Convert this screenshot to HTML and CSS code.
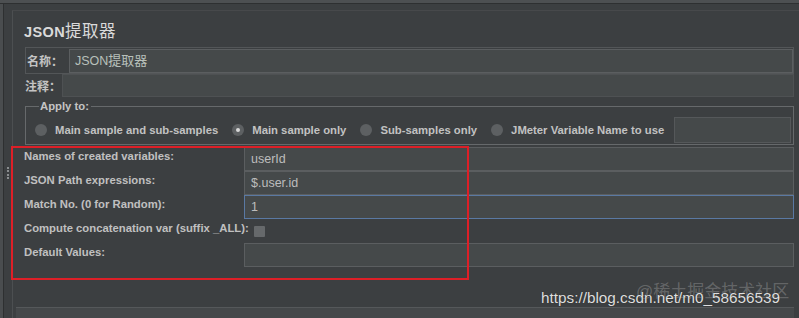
FILE: index.html
```html
<!DOCTYPE html>
<html lang="zh">

<head>
    <meta charset="UTF-8">
    <meta name="viewport" content="width=device-width, initial-scale=1.0">
    <title>JSON提取器</title>
    <link rel="stylesheet" href="styles.css">
</head>

<body>
    <div class="app">
        <div class="top-strip"></div>
        <div class="frame">
            <div class="frame-edge"></div>
            <div class="gutter"><span class="grip"></span></div>

            <div class="panel">
                <!-- TITULO -->
                <h1 class="title">JSON<span class="cjk">提取器</span></h1>

                <!-- NOME -->
                <div class="name-row">
                    <span class="cn-label">名称：</span>
                    <div class="input name-input">JSON<span class="cjk-small">提取器</span></div>
                </div>

                <!-- COMENTARIO -->
                <div class="comment-row">
                    <span class="cn-label">注释：</span>
                    <div class="input"></div>
                </div>

                <!-- APPLY TO -->
                <fieldset class="apply">
                    <legend>Apply to:</legend>
                    <label class="radio"><span class="dot"></span>Main sample and sub-samples</label>
                    <label class="radio"><span class="dot checked"></span>Main sample only</label>
                    <label class="radio"><span class="dot"></span>Sub-samples only</label>
                    <label class="radio"><span class="dot"></span>JMeter Variable Name to use</label>
                    <div class="input var-input"></div>
                </fieldset>

                <!-- CAMPOS -->
                <div class="fields">
                    <div class="field">
                        <span class="field-label">Names of created variables:</span>
                        <div class="input">userId</div>
                    </div>
                    <div class="field">
                        <span class="field-label">JSON Path expressions:</span>
                        <div class="input">$.user.id</div>
                    </div>
                    <div class="field">
                        <span class="field-label">Match No. (0 for Random):</span>
                        <div class="input focused">1</div>
                    </div>
                    <div class="field">
                        <span class="field-label auto">Compute concatenation var (suffix _ALL):</span>
                        <span class="checkbox"></span>
                    </div>
                    <div class="field">
                        <span class="field-label">Default Values:</span>
                        <div class="input"></div>
                    </div>
                </div>

                <div class="spacer"></div>
                <div class="panel-foot"></div>
            </div>
        </div>

        <!-- marcação vermelha e marca d'agua por cima -->
        <div class="highlight"></div>
        <div class="watermark-back">@稀土掘金技术社区</div>
        <div class="watermark">https://blog.csdn.net/m0_58656539</div>
    </div>
</body>

</html>
```

FILE: styles.css
```css
body {
    margin: 0;
    background: #3c3f41;
    font-family: "Liberation Sans", "Noto Sans CJK SC", sans-serif;
    color: #bcbcbc;
}

.app {
    position: relative;
    width: 799px;
    height: 318px;
    overflow: hidden;
    display: flex;
    flex-direction: column;
}

.top-strip {
    height: 3px;
    background: #4d5052;
    border-bottom: 1px solid #2e3031;
}

.frame {
    flex: 1;
    display: flex;
}

.frame-edge {
    flex: none;
    width: 3px;
    background: #4a4d4f;
    border-right: 1px solid #2e3031;
}

.gutter {
    flex: none;
    width: 8px;
    display: flex;
    align-items: flex-start;
    justify-content: center;
}

.grip {
    margin-top: 163px;
    width: 0;
    height: 12px;
    border-left: 2px dotted #8a8d8f;
}

.panel {
    flex: 1;
    min-width: 0;
    display: flex;
    flex-direction: column;
    margin-top: 6px;
    border-top: 1px solid #47494b;
    border-left: 1px solid #4c4f51;
    padding: 0 5px 0 12px;
    background: #3c3f41;
}

.title {
    margin: 0 0 0 -1px;
    height: 36px;
    padding-top: 4px;
    box-sizing: border-box;
    line-height: 32px;
    font-size: 14.5px;
    font-weight: bold;
    color: #dadada;
    letter-spacing: 0.4px;
}

.title .cjk {
    font-size: 16.5px;
    font-weight: normal;
}

.input {
    flex: 1;
    box-sizing: border-box;
    background: #45494a;
    border: 1px solid #5b5e60;
    padding-left: 5px;
    font-size: 12.5px;
    line-height: 22px;
    color: #bdbdbd;
}

.input.focused {
    border-color: #5a79a3;
}

.cn-label {
    font-size: 12px;
    font-weight: bold;
    color: #c4c4c4;
}

.name-row {
    height: 27px;
    box-sizing: border-box;
    display: flex;
    align-items: center;
    border: 1px solid #535658;
    padding: 1px 0 1px 0;
}

.name-row .cn-label {
    width: 42px;
    padding-left: 1px;
}

.name-row .input {
    height: 24px;
    color: #b8c0bb;
}

.cjk-small {
    font-size: 13px;
}

.comment-row {
    height: 23px;
    display: flex;
    align-items: center;
}

.comment-row .cn-label {
    width: 37px;
}

.comment-row .input {
    height: 23px;
    border-color: #4e5153;
}

.apply {
    margin: 2px 0 0 0;
    padding: 4px 0 1px 9px;
    border: 1px solid #66696b;
    min-width: 0;
    display: flex;
    align-items: center;
}

.apply legend {
    margin-left: 4px;
    padding: 0 2px 0 1px;
    font-size: 11.3px;
    font-weight: bold;
    line-height: 14px;
    color: #c4c4c4;
}

.radio {
    display: flex;
    align-items: center;
    font-size: 11.3px;
    font-weight: bold;
    color: #c2c2c2;
    margin-right: 14px;
    white-space: nowrap;
}

.dot {
    width: 12px;
    height: 12px;
    border-radius: 50%;
    background: #5d6062;
    margin-right: 8px;
    display: flex;
    align-items: center;
    justify-content: center;
}

.dot.checked::after {
    content: "";
    width: 4px;
    height: 4px;
    border-radius: 50%;
    background: #d8d8d8;
}

.var-input {
    flex: none;
    width: 117px;
    height: 26px;
    margin-left: -4px;
    border-color: #55585a;
}

.fields {
    margin-top: 2px;
    display: flex;
    flex-direction: column;
}

.field {
    height: 24px;
    display: flex;
    align-items: flex-start;
}

.field-label {
    width: 220px;
    flex: none;
    margin-left: -1px;
    font-size: 11.3px;
    font-weight: bold;
    line-height: 18px;
    color: #c0c0c0;
    white-space: nowrap;
}

.field-label.auto {
    width: auto;
}

.field .input {
    height: 24px;
    padding-left: 6px;
}

.checkbox {
    margin: 7px 0 0 5px;
    width: 11px;
    height: 11px;
    background: #66696b;
    border-radius: 1px;
}

.spacer {
    flex: 1;
}

.panel-foot {
    height: 10px;
    margin-left: -9px;
    background: #45484a;
    border-top: 1px solid #55585a;
}

.highlight {
    position: absolute;
    left: 11px;
    top: 146px;
    width: 454px;
    height: 130px;
    border: 2px solid #dd1f27;
}

.watermark,
.watermark-back {
    position: absolute;
    white-space: nowrap;
}

.watermark {
    left: 541px;
    top: 289px;
    font-size: 15.3px;
    line-height: 18px;
    color: #dedede;
    text-shadow: 0 0 1px #2a2a2a;
}

.watermark-back {
    left: 636px;
    top: 282px;
    font-size: 17px;
    line-height: 20px;
    color: rgba(200, 200, 200, 0.3);
}
```
